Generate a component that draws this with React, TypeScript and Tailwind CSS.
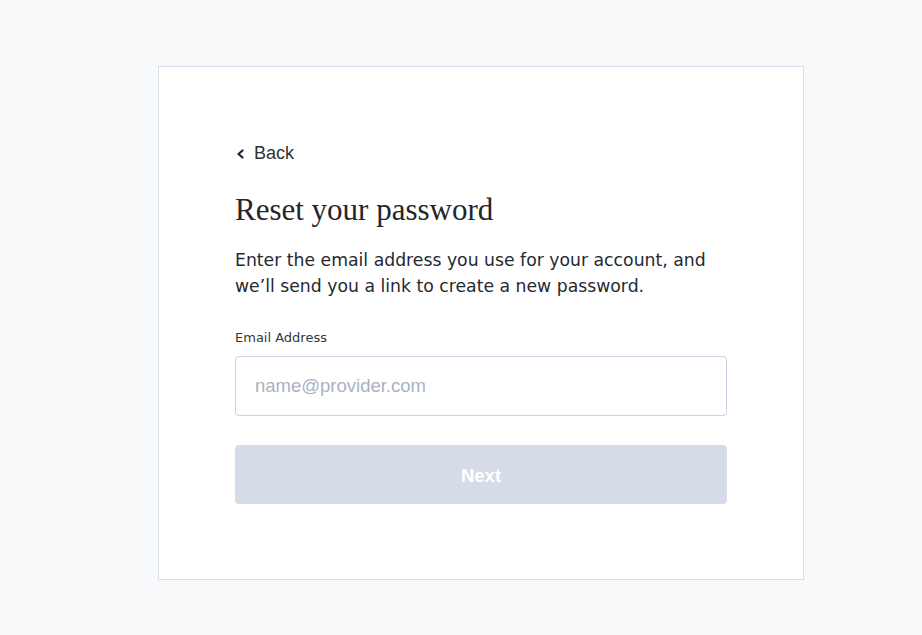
import React from 'react';

export default function App() {
  return (
    <div className="min-h-screen w-full bg-[#f8f9fb] pt-[66px] pl-[158px]" style={{ fontFamily: '"Liberation Sans", Arial, sans-serif' }}>
      <div className="w-[646px] border border-[#d7deea] bg-white px-[76px] pt-[74px] pb-[75px]">
        {/* Back link */}
        <button className="flex h-6 items-center gap-[7px] text-[18px] text-[#2f3237]">
          <svg width="12" height="12" viewBox="0 0 12 12" className="mt-[1px]">
            <path d="M7.5 2.5 L3.5 6 L7.5 9.5" fill="none" stroke="#1f2226" strokeWidth="2.2" strokeLinecap="round" strokeLinejoin="round" />
          </svg>
          <span>Back</span>
        </button>

        <h1 className="mt-[27px] text-[31px] leading-[36px] text-[#23262b]" style={{ fontFamily: '"Liberation Serif", "Times New Roman", serif' }}>
          Reset your password
        </h1>

        <p className="mt-[19px] text-[17.25px] leading-[26px] text-[#26292e]" style={{ fontFamily: '"DejaVu Sans", Verdana, sans-serif' }}>
          Enter the email address you use for your account, and
          <br />
          we’ll send you a link to create a new password.
        </p>

        <label className="mt-[30px] block text-[13px] leading-[18px] text-[#33363b]" style={{ fontFamily: '"DejaVu Sans", Verdana, sans-serif' }}>
          Email Address
        </label>
        <input
          type="email"
          placeholder="name@provider.com"
          className="mt-[9px] block h-[60px] w-full rounded-[4px] border border-[#c8d2e2] px-[19px] text-[18.5px] text-[#26292e] outline-none placeholder:text-[#a8b2c2]"
        />

        <button className="mt-[29px] flex h-[59px] w-full items-center justify-center rounded-[4px] bg-[#d5dce7] pt-[3px] text-[18.5px] font-bold text-white">
          Next
        </button>
      </div>
    </div>
  );
}
